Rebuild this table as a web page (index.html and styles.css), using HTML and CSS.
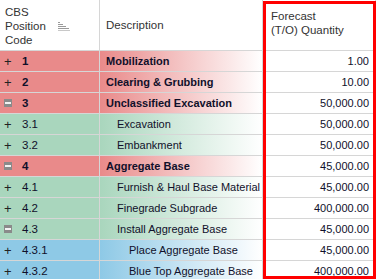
FILE: index.html
```html
<!DOCTYPE html>
<html>
<head>
<meta charset="utf-8">
<link rel="stylesheet" href="styles.css">
</head>
<body>
<div class="grid">
  <div class="row head">
    <div class="c1 hc"><span class="htxt w1">CBS<br>Position<br>Code</span><svg class="sort" width="12" height="9" viewBox="0 0 12 9"><rect x="0" y="0" width="2" height="1" fill="#9a9a9a"/><rect x="0" y="2" width="5" height="1" fill="#9a9a9a"/><rect x="0" y="4" width="8" height="1" fill="#9a9a9a"/><rect x="0" y="6" width="11" height="1" fill="#9a9a9a"/><rect x="0" y="8" width="12" height="1" fill="#c8c8c8"/></svg></div>
    <div class="c2 hc"><span class="htxt">Description</span></div>
    <div class="c3 hc"><span class="htxt">Forecast<br>(T/O) Quantity</span></div>
  </div>
  <div class="row red"><div class="c1"><span class="tg">+</span><b>1</b></div><div class="c2 l1"><b>Mobilization</b></div><div class="c3">1.00</div></div>
  <div class="row red"><div class="c1"><span class="tg">+</span><b>2</b></div><div class="c2 l1"><b>Clearing &amp; Grubbing</b></div><div class="c3">10.00</div></div>
  <div class="row red"><div class="c1"><span class="tg"><i class="mn"></i></span><b>3</b></div><div class="c2 l1"><b>Unclassified Excavation</b></div><div class="c3">50,000.00</div></div>
  <div class="row green"><div class="c1"><span class="tg">+</span>3.1</div><div class="c2 l2">Excavation</div><div class="c3">50,000.00</div></div>
  <div class="row green"><div class="c1"><span class="tg">+</span>3.2</div><div class="c2 l2">Embankment</div><div class="c3">50,000.00</div></div>
  <div class="row red"><div class="c1"><span class="tg"><i class="mn"></i></span><b>4</b></div><div class="c2 l1"><b>Aggregate Base</b></div><div class="c3">45,000.00</div></div>
  <div class="row green"><div class="c1"><span class="tg">+</span>4.1</div><div class="c2 l2">Furnish &amp; Haul Base Material</div><div class="c3">45,000.00</div></div>
  <div class="row green"><div class="c1"><span class="tg">+</span>4.2</div><div class="c2 l2">Finegrade Subgrade</div><div class="c3">400,000.00</div></div>
  <div class="row green"><div class="c1"><span class="tg"><i class="mn"></i></span>4.3</div><div class="c2 l2">Install Aggregate Base</div><div class="c3">45,000.00</div></div>
  <div class="row blue"><div class="c1"><span class="tg">+</span>4.3.1</div><div class="c2 l3">Place Aggregate Base</div><div class="c3">45,000.00</div></div>
  <div class="row blue"><div class="c1"><span class="tg">+</span>4.3.2</div><div class="c2 l3">Blue Top Aggregate Base</div><div class="c3">400,000.00</div></div>
</div>
<div class="hl"></div>
</body>
</html>
```
FILE: styles.css
```css
html, body { margin: 0; padding: 0; background: #fff; }
body { width: 376px; height: 279px; overflow: hidden; position: relative;
  font-family: Tahoma, "Liberation Sans", Arial, sans-serif; font-size: 11px; color: #10102a; }
.grid { display: flex; flex-direction: column; }
.row { display: grid; grid-template-columns: 100px 163px 113px; height: 21px; }
.row > div { border-right: 1px solid #d6d6d6; border-bottom: 1px solid #d6d6d6; display: flex; align-items: center; white-space: nowrap; overflow: hidden; }
.head { height: 51px; }
.hc { color: #333; background: #fff; font-size: 11.5px; }
.head .c1 { padding-left: 5px; }
.htxt { line-height: 14px; }
.w1 { width: 53px; margin-top: 2px; }
.sort { margin-top: 2px; }
.head .c2 { padding-left: 6px; }
.head .c3 { padding-left: 8px; padding-bottom: 4px; justify-content: flex-start; }
.c1 { padding-left: 4px; font-size: 11.5px; }
.tg { width: 18px; display: inline-flex; align-items: center; font-size: 13px; color: #222; }
.mn { display: inline-block; width: 8px; height: 8px; background: #8a8a8a; position: relative; }
.mn::after { content: ""; position: absolute; left: 1px; right: 1px; top: 3px; height: 2px; background: #f2f2f2; }
.c3 { justify-content: flex-end; padding-right: 6px; background: #fff; }
.l1 { padding-left: 6px; }
.l2 { padding-left: 17px; }
.l3 { padding-left: 29px; }
.red .c1 { background: #e98a8a; }
.red .c2 { background: linear-gradient(to right, #e98a8a, #fff); }
.green .c1 { background: #a9d6bd; }
.green .c2 { background: linear-gradient(to right, #a9d6bd, #fff); }
.blue .c1 { background: #8ec9e6; }
.blue .c2 { background: linear-gradient(to right, #8ec9e6, #fff); }
.hl { position: absolute; left: 263px; top: 1px; width: 113px; height: 278px; box-sizing: border-box; border: 3px solid #ff0000; pointer-events: none; }
```
